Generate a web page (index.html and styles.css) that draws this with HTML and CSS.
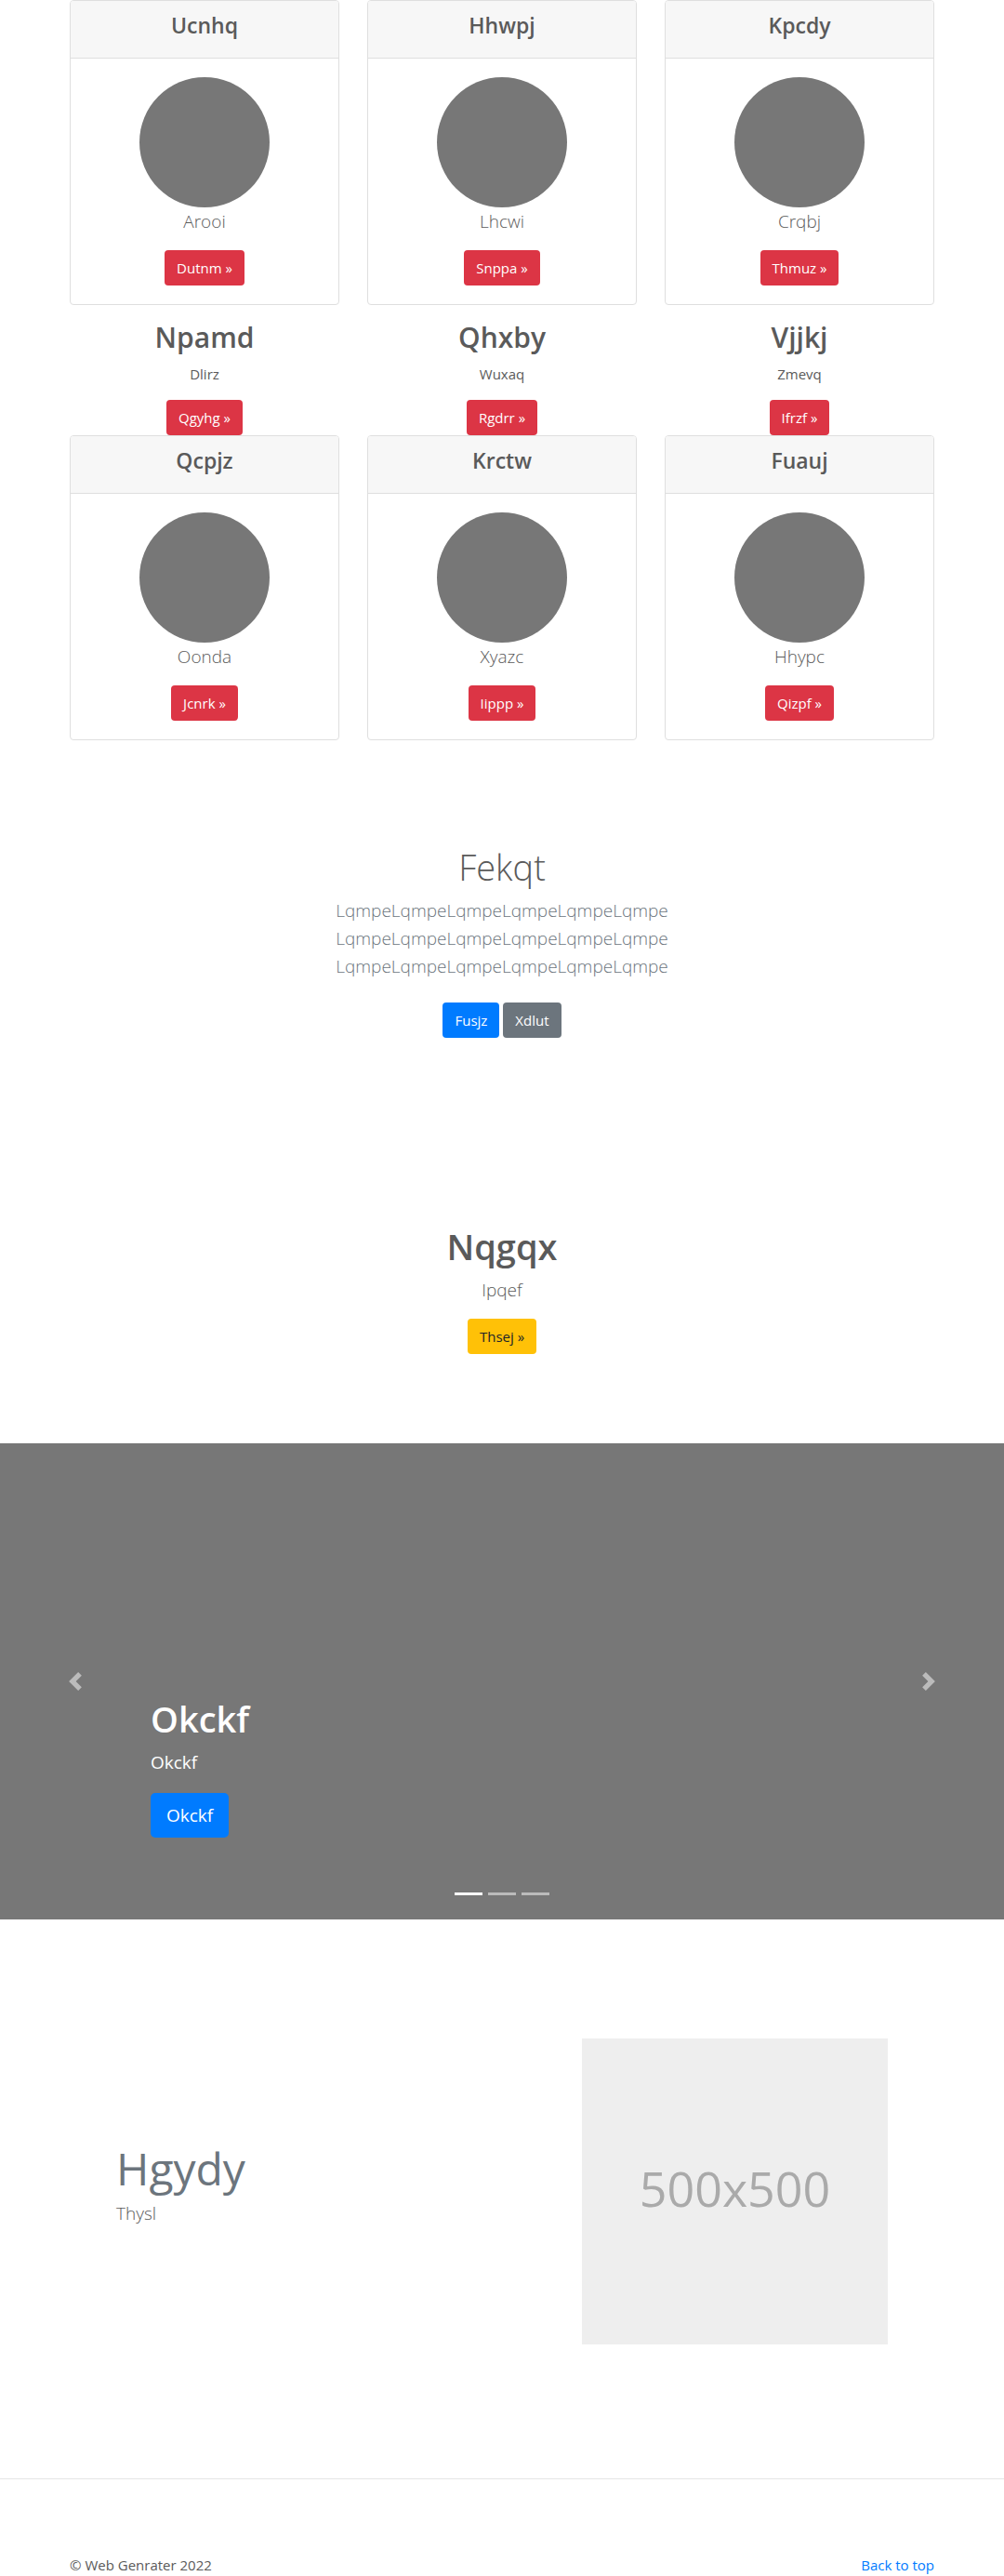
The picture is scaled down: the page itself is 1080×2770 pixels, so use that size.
FILE: index.html
```html
<!DOCTYPE html>
<html lang="en">
<head>
<meta charset="utf-8">
<meta name="viewport" content="width=device-width, initial-scale=1">
<title>Web Genrater</title>
<link rel="stylesheet" href="styles.css">
</head>
<body>
<main>
  <div class="container columns">
    <article class="card">
      <div class="card-header"><h4>Ucnhq</h4></div>
      <div class="card-body"><div class="avatar"></div><p class="lead">Arooi</p><a class="btn btn-danger" href="#">Dutnm »</a></div>
    </article>
    <article class="card">
      <div class="card-header"><h4>Hhwpj</h4></div>
      <div class="card-body"><div class="avatar"></div><p class="lead">Lhcwi</p><a class="btn btn-danger" href="#">Snppa »</a></div>
    </article>
    <article class="card">
      <div class="card-header"><h4>Kpcdy</h4></div>
      <div class="card-body"><div class="avatar"></div><p class="lead">Crqbj</p><a class="btn btn-danger" href="#">Thmuz »</a></div>
    </article>
  </div>

  <div class="container columns">
    <section class="blurb"><h2>Npamd</h2><p>Dlirz</p><a class="btn btn-danger" href="#">Qgyhg »</a></section>
    <section class="blurb"><h2>Qhxby</h2><p>Wuxaq</p><a class="btn btn-danger" href="#">Rgdrr »</a></section>
    <section class="blurb"><h2>Vjjkj</h2><p>Zmevq</p><a class="btn btn-danger" href="#">Ifrzf »</a></section>
  </div>

  <div class="container columns">
    <article class="card">
      <div class="card-header"><h4>Qcpjz</h4></div>
      <div class="card-body"><div class="avatar"></div><p class="lead">Oonda</p><a class="btn btn-danger" href="#">Jcnrk »</a></div>
    </article>
    <article class="card">
      <div class="card-header"><h4>Krctw</h4></div>
      <div class="card-body"><div class="avatar"></div><p class="lead">Xyazc</p><a class="btn btn-danger" href="#">Iippp »</a></div>
    </article>
    <article class="card">
      <div class="card-header"><h4>Fuauj</h4></div>
      <div class="card-body"><div class="avatar"></div><p class="lead">Hhypc</p><a class="btn btn-danger" href="#">Qizpf »</a></div>
    </article>
  </div>

  <section class="hero">
    <h1 class="light">Fekqt</h1>
    <p class="lead muted">LqmpeLqmpeLqmpeLqmpeLqmpeLqmpe<br>LqmpeLqmpeLqmpeLqmpeLqmpeLqmpe<br>LqmpeLqmpeLqmpeLqmpeLqmpeLqmpe</p>
    <div class="actions">
      <a class="btn btn-primary" href="#">Fusjz</a>
      <a class="btn btn-secondary" href="#">Xdlut</a>
    </div>
  </section>

  <section class="callout">
    <h1>Nqgqx</h1>
    <p class="lead">Ipqef</p>
    <a class="btn btn-warning" href="#">Thsej »</a>
  </section>

  <section class="carousel" aria-label="Carousel">
    <div class="caption">
      <h1>Okckf</h1>
      <p>Okckf</p>
      <a class="btn btn-primary btn-lg" href="#">Okckf</a>
    </div>
    <button class="control prev" type="button" aria-label="Previous">
      <svg width="20" height="20" viewBox="0 0 8 8" fill="#fff"><path d="M5.25 0l-4 4 4 4 1.5-1.5L4.25 4l2.5-2.5L5.25 0z"/></svg>
    </button>
    <button class="control next" type="button" aria-label="Next">
      <svg width="20" height="20" viewBox="0 0 8 8" fill="#fff"><path d="M2.75 0l-1.5 1.5L3.75 4l-2.5 2.5L2.75 8l4-4-4-4z"/></svg>
    </button>
    <div class="indicators">
      <button class="indicator active" type="button" aria-label="Slide 1"></button>
      <button class="indicator" type="button" aria-label="Slide 2"></button>
      <button class="indicator" type="button" aria-label="Slide 3"></button>
    </div>
  </section>

  <section class="container featurette">
    <div>
      <h2 class="featurette-heading">Hgydy</h2>
      <p class="lead">Thysl</p>
    </div>
    <div class="placeholder">500x500</div>
  </section>
</main>

<hr class="divider">
<footer class="container footer">
  <p>© Web Genrater 2022</p>
  <a href="#">Back to top</a>
</footer>
</body>
</html>
```

FILE: styles.css
```css
*, *::before, *::after { box-sizing: border-box; }

body {
  margin: 0;
  background: #fff;
  color: #5a5a5a;
  font-family: "Open Sans", "Noto Sans", sans-serif;
  font-size: 15px;
  line-height: 24px;
}

h1, h2, h4, p { margin: 0; }
h1, h2, h4 { font-weight: 600; margin-bottom: 8px; }
h1 { font-size: 38px; line-height: 48px; }
h2 { font-size: 30px; line-height: 38px; }
h4 { font-size: 23px; line-height: 29px; }
p { margin-bottom: 16px; }
a { color: #007bff; text-decoration: none; }

.light { font-weight: 300; }
.lead { font-size: 19px; line-height: 30px; font-weight: 300; }
.muted { color: #6c757d; }

.container {
  width: 100%;
  max-width: 960px;
  margin: 0 auto;
  padding: 0 15px;
}

.columns {
  display: grid;
  grid-template-columns: repeat(3, 1fr);
  gap: 30px;
  text-align: center;
}

.btn {
  display: inline-block;
  padding: 6px 12px;
  border: 1px solid transparent;
  border-radius: 4px;
  color: #fff;
  line-height: 24px;
  vertical-align: top;
}
.btn-lg { padding: 8px 16px; border-radius: 5px; font-size: 19px; line-height: 30px; }
.btn-danger { background: #dc3545; }
.btn-primary { background: #007bff; }
.btn-secondary { background: #6c757d; }
.btn-warning { background: #ffc107; color: #212529; }

.card { border: 1px solid #dfdfdf; border-radius: 4px; }
.card-header {
  padding: 12px 20px;
  background: #f7f7f7;
  border-bottom: 1px solid #dfdfdf;
  border-radius: 3px 3px 0 0;
}
.card-body { padding: 20px; }
.avatar {
  width: 140px;
  height: 140px;
  margin: 0 auto;
  border-radius: 50%;
  background: #777;
}

.blurb { padding-top: 16px; }

.hero { padding: 112px 15px 96px; text-align: center; }
.actions { display: flex; justify-content: center; gap: 4px; padding: 8px 0; }

.callout { padding: 96px 15px; text-align: center; }

.carousel {
  position: relative;
  height: 512px;
  background: #777;
  color: #fff;
}
.caption { position: absolute; left: 15%; right: 15%; bottom: 88px; }
.caption p { margin-bottom: 18px; font-size: 19px; line-height: 30px; }
.control {
  position: absolute;
  top: 0;
  bottom: 0;
  width: 15%;
  display: flex;
  align-items: center;
  justify-content: center;
  padding: 0;
  border: 0;
  background: none;
  opacity: .5;
}
.prev { left: 0; }
.next { right: 0; }
.indicators {
  position: absolute;
  left: 15%;
  right: 15%;
  bottom: 16px;
  display: flex;
  justify-content: center;
  gap: 6px;
}
.indicator {
  width: 30px;
  height: 23px;
  padding: 0;
  border: solid transparent;
  border-width: 10px 0;
  background: #fff;
  background-clip: padding-box;
  opacity: .5;
}
.indicator.active { opacity: 1; }

.featurette {
  display: flex;
  align-items: center;
  justify-content: space-between;
  padding: 128px 65px 144px;
}
.featurette-heading { margin: 0 0 4px; font-size: 48px; line-height: 58px; font-weight: 400; color: #6c757d; }
.placeholder {
  display: flex;
  align-items: center;
  justify-content: center;
  flex: 0 1 329px;
  aspect-ratio: 1;
  padding-bottom: 8px;
  background: #eee;
  color: #aaa;
  font-size: 52px;
}

.divider { margin: 0 0 80px; border: 0; border-top: 1px solid #e5e5e5; }
.footer { display: flex; justify-content: space-between; }
.footer p { margin: 0; }
```
